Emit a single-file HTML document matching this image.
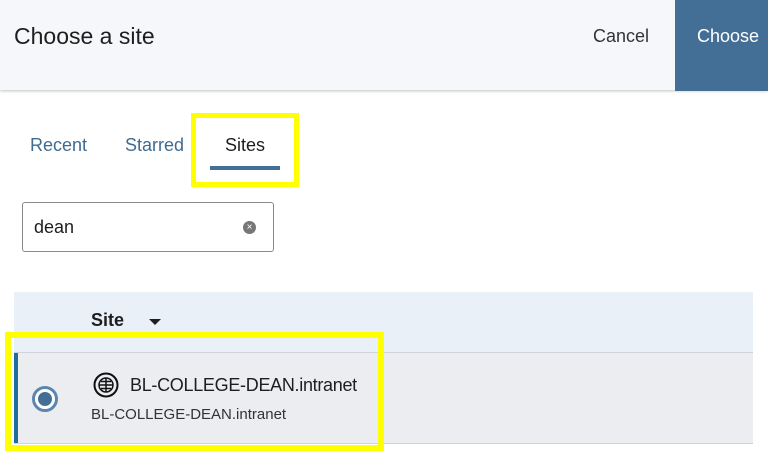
<!DOCTYPE html>
<html><head><style>
body{margin:0;width:768px;height:451px;overflow:hidden;background:#fff;font-family:"Liberation Sans",sans-serif;position:relative}
.a{position:absolute}
</style></head><body>
<div class="a" style="left:0;top:0;width:768px;height:90px;background:#f5f7fa;box-shadow:0 1px 3px rgba(0,0,0,.25)"></div>
<div class="a" style="left:14px;top:23px;font-size:23px;color:#1e1e1e">Choose a site</div>
<div class="a" style="left:593px;top:26px;font-size:18px;color:#333">Cancel</div>
<div class="a" style="left:675px;top:0;width:93px;height:91px;background:#436f97"></div>
<div class="a" style="left:697px;top:26px;font-size:18px;color:#fff">Choose</div>
<div class="a" style="left:30px;top:135px;font-size:18px;color:#3f6b92">Recent</div>
<div class="a" style="left:125px;top:135px;font-size:18px;color:#3f6b92">Starred</div>
<div class="a" style="left:225px;top:135px;font-size:18px;color:#1e1e1e">Sites</div>
<div class="a" style="left:210px;top:166px;width:70px;height:4px;background:#436f97"></div>
<div class="a" style="left:191px;top:113px;width:98px;height:64px;border:5px solid #ffff00"></div>
<div class="a" style="left:22px;top:202px;width:250px;height:48px;border:1px solid #8a8a8a;border-radius:3px"></div>
<div class="a" style="left:34px;top:217px;font-size:18px;color:#1e1e1e">dean</div>
<div class="a" style="left:243px;top:221px;width:13px;height:13px;border-radius:50%;background:#777;color:#fff;font-size:10px;line-height:13px;text-align:center">×</div>
<div class="a" style="left:14px;top:292px;width:739px;height:60px;background:#e9f0f8"></div>
<div class="a" style="left:91px;top:310px;font-size:18px;font-weight:bold;color:#1e1e1e">Site</div>
<div class="a" style="left:149px;top:319px;width:0;height:0;border-left:6px solid transparent;border-right:6px solid transparent;border-top:6px solid #1e1e1e"></div>
<div class="a" style="left:14px;top:352px;width:739px;height:1px;background:#cfd4da"></div>
<div class="a" style="left:14px;top:353px;width:739px;height:90px;background:#ebedf0"></div>
<div class="a" style="left:14px;top:353px;width:4px;height:90px;background:#1f6f96"></div>
<div class="a" style="left:14px;top:443px;width:739px;height:1px;background:#cfd4da"></div>
<div class="a" style="left:32px;top:386px;width:26px;height:26px;border:3px solid #5a86b0;border-radius:50%;box-sizing:border-box;background:#fff"></div>
<div class="a" style="left:38px;top:392px;width:14px;height:14px;border-radius:50%;background:#436f97"></div>
<svg class="a" style="left:93px;top:372px" width="26" height="26" viewBox="0 0 26 26" fill="none" stroke="#111" stroke-width="2"><circle cx="13" cy="13" r="11.5"/><circle cx="13" cy="13" r="7" stroke-width="1.5"/><path d="M13 6v14M6 13h14M8 9.5h10M8 16.5h10" stroke-width="1.5"/></svg>
<div class="a" style="left:130px;top:375px;font-size:18px;color:#1e1e1e;letter-spacing:-0.3px">BL-COLLEGE-DEAN.intranet</div>
<div class="a" style="left:91px;top:406px;font-size:15px;color:#333">BL-COLLEGE-DEAN.intranet</div>
<div class="a" style="left:5px;top:332px;width:367px;height:107px;border:6px solid #ffff00"></div>
</body></html>
